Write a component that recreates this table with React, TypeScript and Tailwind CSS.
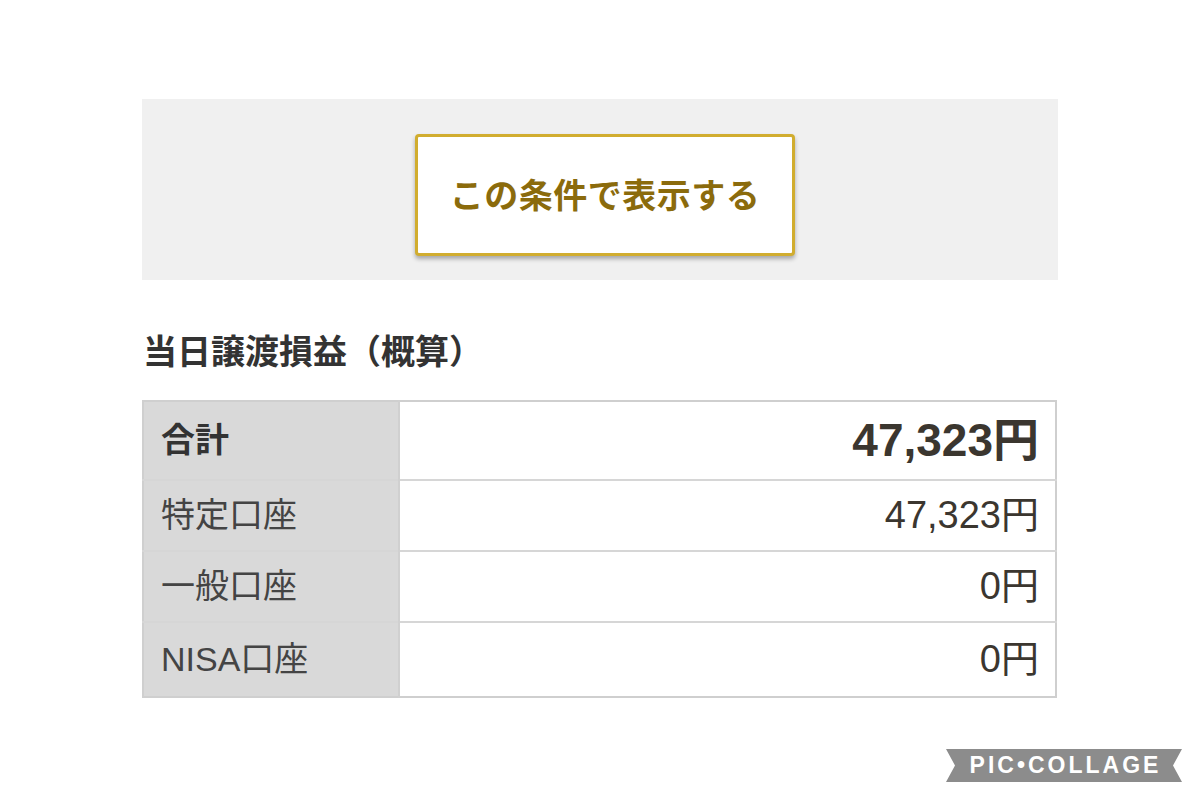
export default function App() {
  const rows = [
    { label: '特定口座', value: '47,323円' },
    { label: '一般口座', value: '0円' },
    { label: 'NISA口座', value: '0円' },
  ];

  return (
    <main
      className="relative w-[1200px] h-[800px] bg-white text-[#333]"
      style={{ fontFamily: '"Liberation Sans", "Noto Sans CJK JP", sans-serif' }}
    >
      <div className="pt-[99px] px-[142px]">
        {/* SEARCH BUTTON PANEL */}
        <section className="h-[181px] bg-[#f0f0f0] flex items-start justify-center pt-[35px] pl-[10px]">
          <button className="w-[380px] h-[122px] bg-white border-[3px] border-[#d1ad2f] rounded-[4px] shadow-[0_3px_4px_rgba(0,0,0,0.3)] text-[34px] font-bold text-[#8b6b0c] tracking-[0.5px] pt-[2px]">
            この条件で表示する
          </button>
        </section>

        {/* RESULTS */}
        <h2 className="mt-[51px] ml-[1px] text-[34px] font-bold leading-[42px] text-[#333]">
          当日譲渡損益（概算）
        </h2>

        <table className="mt-[27px] w-[915px] border-collapse border-2 border-[#cfcfcf]">
          <tbody>
            <tr className="h-[79px] border-b-2 border-[#d6d6d6]">
              <th className="w-[256px] bg-[#d9d9d9] text-left pl-[17px] text-[34px] font-bold text-[#333] border-r-2 border-[#d0d0d0]">
                合計
              </th>
              <td className="text-right pr-[16px] text-[46px] font-bold text-[#3b362f]">47,323円</td>
            </tr>
            {rows.map((r, i) => (
              <tr
                key={r.label}
                className={i === rows.length - 1 ? 'h-[75px]' : 'h-[71px] border-b-2 border-[#d6d6d6]'}
              >
                <th className="bg-[#d9d9d9] text-left pl-[17px] text-[34px] font-normal text-[#444] border-r-2 border-[#d0d0d0]">
                  {r.label}
                </th>
                <td className="text-right pr-[16px] text-[38px] font-normal text-[#3b362f]">{r.value}</td>
              </tr>
            ))}
          </tbody>
        </table>
      </div>

      {/* WATERMARK */}
      <div className="absolute left-[946px] top-[749px] w-[236px] h-[33px]">
        <svg width="236" height="33" viewBox="0 0 236 33" className="absolute inset-0">
          <polygon points="0,0 236,0 227,16.5 236,33 0,33 9,16.5" fill="#8c8c8c" />
        </svg>
        <div className="relative h-full flex items-center justify-center text-white text-[23px] font-bold tracking-[3px] pl-[3px]">
          PIC•COLLAGE
        </div>
      </div>
    </main>
  );
}
